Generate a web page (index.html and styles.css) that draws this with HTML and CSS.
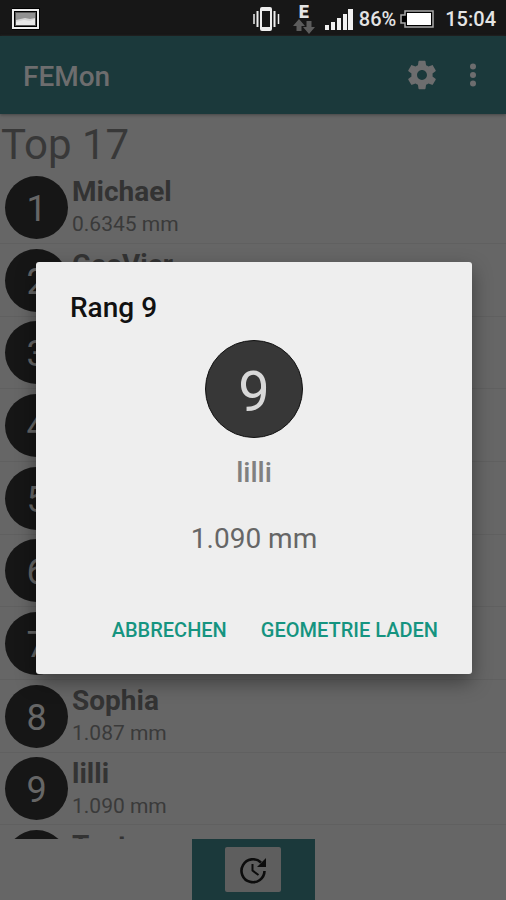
FILE: index.html
```html
<!DOCTYPE html>
<html lang="de">
<head>
<meta charset="utf-8">
<meta name="viewport" content="width=device-width, initial-scale=1">
<title>FEMon</title>
<link rel="stylesheet" href="styles.css">
</head>
<body>
<div class="status">
  <svg class="picture" width="28" height="22" viewBox="0 0 28 22" aria-hidden="true">
    <rect width="28" height="22" fill="#000"/>
    <rect x="1" y="2" width="25" height="18" fill="none" stroke="#eee" stroke-width="2"/>
    <rect x="3.500" y="4.500" width="20" height="13" fill="#d5d5d5" stroke="#555" stroke-width="1"/>
    <path d="M4 5h19v5l-5 1-5-1-9 2z" fill="#929292"/>
    <path d="M4 14l8-2 6 1 5-2v6H4z" fill="#e8e8e8"/>
  </svg>
  <svg width="28" height="26" viewBox="0 0 28 26" aria-hidden="true" fill="none" stroke="#eee">
    <rect x="8" y="2" width="10" height="22" rx="1" stroke-width="2"/>
    <path d="M8 3.500h10M8 22.500h10" stroke-width="3"/>
    <path d="M4.500 5v16M21.500 5v16" stroke-width="2"/>
    <path d="M1 8v10M25.500 8v10" stroke-width="1.500"/>
  </svg>
  <div class="network">
    <span>E</span>
    <svg width="22" height="15" viewBox="0 0 22 15" aria-hidden="true" fill="#5c5c5c">
      <path d="M6 0l6 7H8.500v5h-5V7H0zM16 15l-6-7h3.500V2h5v6H22z"/>
    </svg>
  </div>
  <svg class="signal" width="28" height="23" viewBox="0 0 28 23" aria-hidden="true" fill="#f0f0f0">
    <path d="M0 17h4v5H0zM6 14h4v8H6zM12 10h4v12h-4zM18 6h4v16h-4zM23 1h5v21h-5z"/>
  </svg>
  <span class="percent">86%</span>
  <svg class="battery" width="34" height="18" viewBox="0 0 34 18" aria-hidden="true">
    <path d="M5 1h28v16H5v-4H1V5h4z" fill="#000" stroke="#aaa" stroke-width="1.500"/>
    <rect x="7" y="3" width="24" height="12" fill="#fff"/>
  </svg>
  <time class="clock">15:04</time>
</div>

<header class="bar">
  <h1>FEMon</h1>
  <button class="icon" type="button" aria-label="Einstellungen">
    <svg width="34" height="34" viewBox="0 0 24 24" fill="#6d6d6e"><path d="M19.430 12.980c.04-.32.07-.64.07-.98s-.03-.66-.07-.98l2.110-1.650c.19-.15.24-.42.12-.64l-2-3.460c-.12-.22-.39-.3-.61-.22l-2.490 1c-.52-.4-1.080-.73-1.690-.98l-.38-2.650C14.460 2.180 14.250 2 14 2h-4c-.25 0-.46.18-.49.42l-.38 2.650c-.61.25-1.170.59-1.690.98l-2.490-1c-.23-.09-.49 0-.61.22l-2 3.460c-.13.22-.07.49.12.64l2.110 1.650c-.04.32-.07.65-.07.98s.03.66.07.98l-2.110 1.650c-.19.15-.24.42-.12.64l2 3.460c.12.22.39.3.61.22l2.490-1c.52.4 1.080.73 1.690.98l.38 2.650c.03.24.24.42.49.42h4c.25 0 .46-.18.49-.42l.38-2.650c.61-.25 1.170-.59 1.690-.98l2.490 1c.23.09.49 0 .61-.22l2-3.460c.12-.22.07-.49-.12-.64l-2.110-1.650zM12 15.500c-1.930 0-3.500-1.570-3.500-3.500s1.570-3.500 3.500-3.500 3.500 1.570 3.500 3.500-1.570 3.500-3.500 3.500z"/></svg>
  </button>
  <button class="icon" type="button" aria-label="Mehr">
    <svg width="8" height="24" viewBox="0 0 8 24" fill="#6d6d6e"><circle cx="4" cy="3.500" r="3"/><circle cx="4" cy="12" r="3"/><circle cx="4" cy="20.500" r="3"/></svg>
  </button>
</header>

<main>
  <h2>Top 17</h2>
  <ol class="list">
    <li><span class="rank">1</span><div><b>Michael</b><span class="size">0.6345 mm</span></div></li>
    <li><span class="rank">2</span><div><b>GeoVier</b></div></li>
    <li><span class="rank">3</span></li>
    <li><span class="rank">4</span></li>
    <li><span class="rank">5</span></li>
    <li><span class="rank">6</span></li>
    <li><span class="rank">7</span></li>
    <li><span class="rank">8</span><div><b>Sophia</b><span class="size">1.087 mm</span></div></li>
    <li><span class="rank">9</span><div><b>lilli</b><span class="size">1.090 mm</span></div></li>
    <li><span class="rank"></span><div><b>Tester</b></div></li>
  </ol>
</main>

<footer>
  <div class="panel">
    <button class="refresh" type="button" aria-label="Aktualisieren">
      <svg width="32" height="32" viewBox="0 0 32 32" fill="none" stroke="#0c0c0c">
        <path d="M24 8.500A11.500 11.500 0 1 0 27.500 17" stroke-width="2.600"/>
        <path d="M29 4v9h-9z" fill="#0c0c0c" stroke="none"/>
        <path d="M15.500 10v6.500l6 4.500" stroke-width="2"/>
      </svg>
    </button>
  </div>
</footer>

<div class="overlay">
  <section class="dialog" role="dialog" aria-labelledby="title">
    <h3 id="title">Rang 9</h3>
    <div class="content">
      <span class="medal">9</span>
      <p class="name">lilli</p>
      <p class="value">1.090 mm</p>
    </div>
    <div class="actions">
      <button type="button">ABBRECHEN</button>
      <button type="button">GEOMETRIE LADEN</button>
    </div>
  </section>
</div>
</body>
</html>
```
FILE: styles.css
```css
* { box-sizing: border-box; }

body {
  margin: 0;
  height: 100vh;
  display: flex;
  flex-direction: column;
  overflow: hidden;
  background: #666;
  color: #333;
  font-family: Roboto, "Liberation Sans", sans-serif;
}

h1, h2, h3, p, ol { margin: 0; padding: 0; }

button {
  padding: 0;
  border: 0;
  background: none;
  font: inherit;
}

svg { display: block; flex: none; }

.status {
  flex: none;
  display: flex;
  align-items: center;
  height: 36px;
  padding: 2px 10px 0 12px;
  background: #171717;
  color: #e4e4e4;
  font-size: 20px;
  font-weight: 500;
}

.picture { margin-right: auto; }

.network {
  display: flex;
  flex-direction: column;
  align-items: center;
  width: 22px;
  margin: 0 10px 0 12px;
  font-size: 18px;
  font-weight: 900;
  line-height: 14px;
}

.percent { margin-left: 6px; }
.battery { margin-left: 4px; }
.clock { margin-left: 11px; }

.bar {
  position: relative;
  flex: none;
  display: flex;
  align-items: center;
  height: 78px;
  padding: 0 29px 0 23px;
  background: #1b393b;
  box-shadow: 0 1px 3px #444;
}

.bar h1 {
  flex: 1;
  padding-top: 2px;
  color: #6d6d6e;
  font-size: 28px;
  font-weight: 500;
}

.icon + .icon { margin-left: 30px; }

main {
  flex: 1;
  min-height: 0;
  overflow: hidden;
}

h2 {
  padding: 6px 0 1px 1px;
  color: #383838;
  font-size: 42px;
  font-weight: 400;
  line-height: 50px;
}

.list { list-style: none; }

.list li {
  display: flex;
  align-items: center;
  gap: 4px;
  height: 73px;
  padding: 0 5px;
  border-bottom: 1px solid #606060;
}

.list li:nth-child(3n) { height: 72px; }

.list div {
  align-self: flex-start;
  display: flex;
  flex-direction: column;
}

.rank {
  width: 63px;
  height: 63px;
  border-radius: 50%;
  background: #161616;
  color: #666;
  font-size: 36px;
  line-height: 67px;
  text-align: center;
}

.list b {
  padding-top: 4px;
  font-size: 28px;
  font-weight: 700;
  line-height: 34px;
}

.size {
  color: #3a3a3a;
  font-size: 21px;
  line-height: 30px;
}

footer {
  flex: none;
  display: flex;
  justify-content: center;
  height: 61px;
}

.panel {
  display: flex;
  justify-content: center;
  align-items: center;
  width: 123px;
  background: #1b393b;
}

.refresh {
  display: flex;
  justify-content: center;
  align-items: center;
  width: 56px;
  height: 45px;
  border-radius: 2px;
  background: #5e5e5e;
}

.overlay {
  position: absolute;
  inset: 36px 0 0;
  display: flex;
  align-items: center;
  justify-content: center;
  padding: 0 34px 0 36px;
}

.dialog {
  flex: 1;
  padding: 28px 34px 26px;
  border-radius: 3px;
  background: #eee;
  box-shadow: 0 8px 20px rgba(0, 0, 0, .4);
}

.dialog h3 {
  color: #111;
  font-size: 28px;
  font-weight: 500;
  line-height: 36px;
}

.content {
  display: flex;
  flex-direction: column;
  align-items: center;
  padding-top: 14px;
}

.medal {
  width: 98px;
  height: 98px;
  border: 1px solid #111;
  border-radius: 50%;
  background: #373737;
  color: #d8d8d8;
  font-size: 56px;
  line-height: 102px;
  text-align: center;
}

.content p {
  font-size: 28px;
  line-height: 34px;
}

.name {
  padding-top: 18px;
  color: #808080;
  font-weight: 500;
}

.value {
  padding-top: 32px;
  color: #666;
}

.actions {
  display: flex;
  justify-content: flex-end;
  gap: 34px;
  padding-top: 56px;
}

.actions button {
  color: #159480;
  font-size: 20px;
  font-weight: 500;
  line-height: 36px;
  white-space: nowrap;
}
```
